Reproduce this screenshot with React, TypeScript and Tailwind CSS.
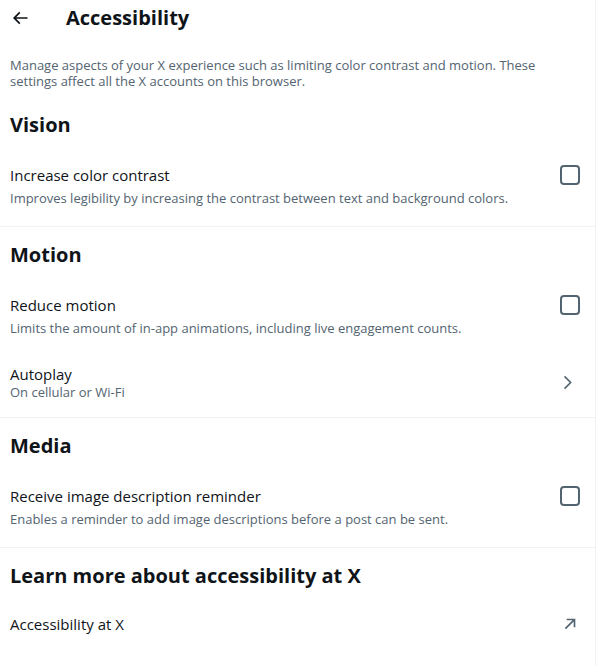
import React from "react";

const FONT = { fontFamily: '"Open Sans", "Liberation Sans", sans-serif' };

function Checkbox() {
  return <div className="w-5 h-5 rounded-[4px] border-2 border-[#536471] shrink-0" />;
}

function SectionTitle({ children }: { children: React.ReactNode }) {
  return (
    <h2 className="px-[10px] pt-[16px] pb-[13px] text-[20px] leading-6 font-bold text-[#0f1419]">
      {children}
    </h2>
  );
}

function CheckRow({ title, sub, last }: { title: string; sub: string; last?: boolean }) {
  return (
    <div className={`flex items-start justify-between pl-[10px] pr-[15px] pt-[15px] ${last ? "pb-[20px]" : "pb-[13px]"}`}>
      <div className="flex flex-col gap-[5px]">
        <span className="text-[15px] leading-5 text-[#0f1419]">{title}</span>
        <span className="text-[13px] leading-4 text-[#536471]">{sub}</span>
      </div>
      <Checkbox />
    </div>
  );
}

function Divider() {
  return <div className="h-px bg-[#eff3f4]" />;
}

export default function App() {
  return (
    <div className="w-[596px] min-h-screen bg-white border-r border-[#eff3f4]" style={FONT}>
      <div className="h-9 flex items-center pl-[10px]">
        <svg viewBox="0 0 24 24" className="w-5 h-5 fill-[#0f1419]">
          <path d="M7.414 13l5.043 5.04-1.414 1.42L3.586 12l7.457-7.46 1.414 1.42L7.414 11H21v2H7.414z" />
        </svg>
        <h1 className="ml-9 text-[20px] leading-6 font-bold text-[#0f1419]">Accessibility</h1>
      </div>

      <p className="px-[10px] pt-[21px] pb-[8px] pr-[50px] text-[13px] leading-4 text-[#536471]">
        Manage aspects of your X experience such as limiting color contrast and motion. These settings affect all
        the X accounts on this browser.
      </p>

      <SectionTitle>Vision</SectionTitle>
      <CheckRow
        title="Increase color contrast"
        sub="Improves legibility by increasing the contrast between text and background colors."
        last
      />
      <Divider />

      <SectionTitle>Motion</SectionTitle>
      <CheckRow title="Reduce motion" sub="Limits the amount of in-app animations, including live engagement counts." />
      <div className="flex items-center justify-between pl-[10px] pr-[18px] pt-[15px] pb-[17px]">
        <div className="flex flex-col">
          <span className="text-[15px] leading-5 text-[#0f1419]">Autoplay</span>
          <span className="text-[13px] leading-4 text-[#536471]">On cellular or Wi-Fi</span>
        </div>
        <svg viewBox="0 0 24 24" className="w-[19px] h-[19px] fill-[#536471]">
          <path d="M14.586 12L7.543 4.96l1.414-1.42L17.414 12l-8.457 8.46-1.414-1.42L14.586 12z" />
        </svg>
      </div>
      <Divider />

      <SectionTitle>Media</SectionTitle>
      <CheckRow
        title="Receive image description reminder"
        sub="Enables a reminder to add image descriptions before a post can be sent."
        last
      />
      <Divider />

      <SectionTitle>Learn more about accessibility at X</SectionTitle>
      <div className="flex items-center justify-between pl-[10px] pr-[17px] pt-[13px] pb-[26px]">
        <span className="text-[15px] leading-5 text-[#0f1419]">Accessibility at X</span>
        <svg viewBox="0 0 24 24" className="w-4 h-4 fill-[#536471]">
          <path d="M20 4v13h-2.5V8.27L6.03 19.77 4.23 17.97 15.73 6.5H7V4h13z" />
        </svg>
      </div>
    </div>
  );
}
